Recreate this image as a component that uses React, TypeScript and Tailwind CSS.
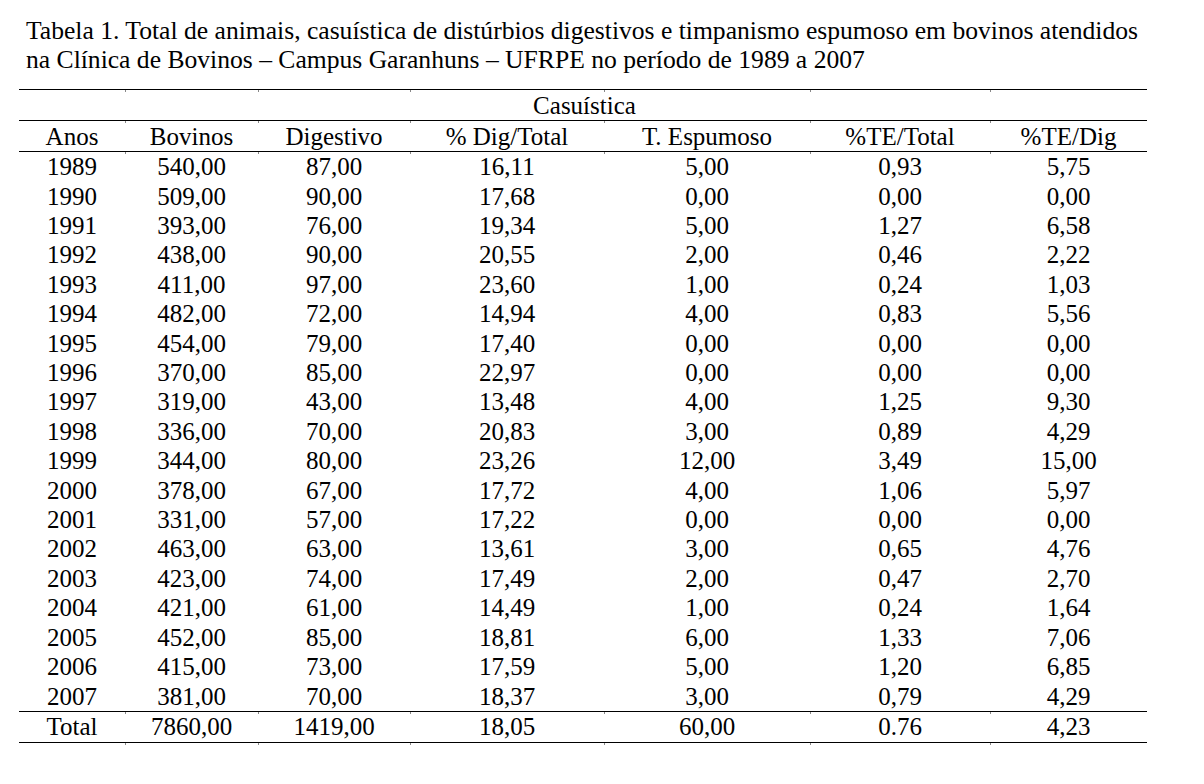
import React from 'react';

const cols = 'grid grid-cols-[106px_133px_152px_194px_206px_180px_157px]';

const headers = ['Anos', 'Bovinos', 'Digestivo', '% Dig/Total', 'T. Espumoso', '%TE/Total', '%TE/Dig'];

const rows: string[][] = [
  ['1989', '540,00', '87,00', '16,11', '5,00', '0,93', '5,75'],
  ['1990', '509,00', '90,00', '17,68', '0,00', '0,00', '0,00'],
  ['1991', '393,00', '76,00', '19,34', '5,00', '1,27', '6,58'],
  ['1992', '438,00', '90,00', '20,55', '2,00', '0,46', '2,22'],
  ['1993', '411,00', '97,00', '23,60', '1,00', '0,24', '1,03'],
  ['1994', '482,00', '72,00', '14,94', '4,00', '0,83', '5,56'],
  ['1995', '454,00', '79,00', '17,40', '0,00', '0,00', '0,00'],
  ['1996', '370,00', '85,00', '22,97', '0,00', '0,00', '0,00'],
  ['1997', '319,00', '43,00', '13,48', '4,00', '1,25', '9,30'],
  ['1998', '336,00', '70,00', '20,83', '3,00', '0,89', '4,29'],
  ['1999', '344,00', '80,00', '23,26', '12,00', '3,49', '15,00'],
  ['2000', '378,00', '67,00', '17,72', '4,00', '1,06', '5,97'],
  ['2001', '331,00', '57,00', '17,22', '0,00', '0,00', '0,00'],
  ['2002', '463,00', '63,00', '13,61', '3,00', '0,65', '4,76'],
  ['2003', '423,00', '74,00', '17,49', '2,00', '0,47', '2,70'],
  ['2004', '421,00', '61,00', '14,49', '1,00', '0,24', '1,64'],
  ['2005', '452,00', '85,00', '18,81', '6,00', '1,33', '7,06'],
  ['2006', '415,00', '73,00', '17,59', '5,00', '1,20', '6,85'],
  ['2007', '381,00', '70,00', '18,37', '3,00', '0,79', '4,29'],
];

const total = ['Total', '7860,00', '1419,00', '18,05', '60,00', '0.76', '4,23'];

// horizontal rule with the little column marks Word leaves behind
const Rule: React.FC = () => (
  <div className={`${cols} h-px bg-black`}>
    {headers.map((h, i) => (
      <div key={h} className="relative">
        {i > 0 && <div className="absolute left-0 top-px w-px h-[2px] bg-[#888]" />}
      </div>
    ))}
  </div>
);

const Row: React.FC<{ cells: string[]; tall?: boolean }> = ({ cells, tall }) => (
  <div className={`${cols} ${tall ? 'h-[30px]' : 'h-[29.42px]'} items-center`}>
    {cells.map((c, i) => (
      <div key={i} className="text-center leading-none">
        {c}
      </div>
    ))}
  </div>
);

const App: React.FC = () => {
  return (
    <div className="w-[1204px] h-[784px] bg-white text-black text-[25px] font-['Liberation_Serif','Times_New_Roman',serif]">
      <div className="pl-[26px] pt-[16px] text-[25.6px] leading-[29px]">
        <p>Tabela 1. Total de animais, casuística de distúrbios digestivos e timpanismo espumoso em bovinos atendidos</p>
        <p>na Clínica de Bovinos – Campus Garanhuns – UFRPE no período de 1989 a 2007</p>
      </div>

      <div className="ml-[19px] mt-[15px] w-[1128px]">
        <Rule />
        <div className="h-[30px] flex items-center justify-center leading-none">
          <span className="ml-[3px]">Casuística</span>
        </div>
        <Rule />
        <Row cells={headers} tall />
        <Rule />
        {rows.map((r) => (
          <Row key={r[0]} cells={r} />
        ))}
        <Rule />
        <Row cells={total} tall />
        <Rule />
      </div>
    </div>
  );
};

export default App;
